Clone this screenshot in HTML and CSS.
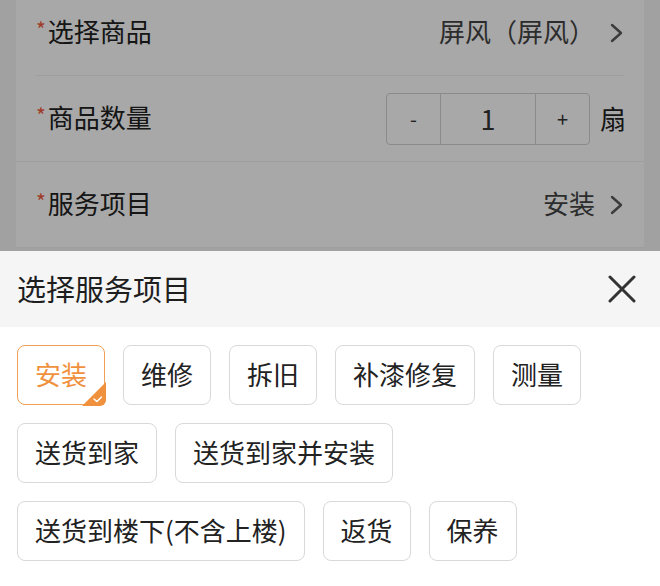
FILE: index.html
```html
<!DOCTYPE html>
<html lang="zh-CN">

<head>
    <meta charset="UTF-8">
    <meta name="viewport" content="width=device-width, initial-scale=1.0">
    <link rel="stylesheet" href="styles.css">
    <title>选择服务项目</title>
</head>

<body>
    <div class="page">
        <div class="card">
            <div class="form-row row-inset">
                <span class="form-label"><i class="required">*</i>选择商品</span>
                <span class="form-value">屏风（屏风）</span>
                <svg class="chevron" viewBox="0 0 14 20"><path d="M2 2l9 8-9 8" fill="none" stroke="currentColor" stroke-width="2.4" stroke-linecap="round" stroke-linejoin="round"/></svg>
            </div>
            <div class="form-row">
                <span class="form-label"><i class="required">*</i>商品数量</span>
                <div class="stepper">
                    <span class="step-btn step-minus">-</span>
                    <span class="step-value">1</span>
                    <span class="step-btn step-plus">+</span>
                </div>
                <span class="unit">扇</span>
            </div>
            <div class="form-row">
                <span class="form-label"><i class="required">*</i>服务项目</span>
                <span class="form-value">安装</span>
                <svg class="chevron" viewBox="0 0 14 20"><path d="M2 2l9 8-9 8" fill="none" stroke="currentColor" stroke-width="2.4" stroke-linecap="round" stroke-linejoin="round"/></svg>
            </div>
        </div>
        <div class="mask"></div>
    </div>

    <div class="sheet">
        <div class="sheet-header">
            <span class="sheet-title">选择服务项目</span>
            <svg class="close-icon" viewBox="0 0 28 28"><path d="M2 2l24 24M26 2L2 26" stroke="currentColor" stroke-width="3" stroke-linecap="round"/></svg>
        </div>
        <div class="chips">
            <span class="chip selected">安装
                <svg class="chip-check" viewBox="0 0 24 24"><path d="M24 0V18a6 6 0 0 1-6 6H0z" fill="#f0913d"/><path d="M12 17l3 2.6 4.5-4.6" fill="none" stroke="#ffffff" stroke-width="1.4" stroke-linecap="round" stroke-linejoin="round"/></svg>
            </span>
            <span class="chip">维修</span>
            <span class="chip">拆旧</span>
            <span class="chip">补漆修复</span>
            <span class="chip">测量</span>
            <span class="chip">送货到家</span>
            <span class="chip">送货到家并安装</span>
            <span class="chip">送货到楼下(不含上楼)</span>
            <span class="chip">返货</span>
            <span class="chip">保养</span>
        </div>
    </div>
</body>

</html>
```

FILE: styles.css
```css
* {
    margin: 0;
    padding: 0;
    box-sizing: border-box;
}

body {
    font-family: "Noto Sans CJK SC", "Noto Sans", sans-serif;
    width: 660px;
    height: 586px;
    overflow: hidden;
    background-color: #ffffff;
    color: #222222;
}

/* Page under the mask */
.page {
    position: relative;
    height: 251px;
    overflow: hidden;
    padding: 0 16px;
    background-color: #f4f4f6;
}

.card {
    margin-top: -10px;
    background-color: #ffffff;
}

.form-row {
    display: flex;
    align-items: center;
    height: 86px;
    padding: 0 20px;
    border-bottom: 1px solid #f0f0f0;
}

.row-inset {
    margin: 0 20px;
    padding: 0;
}

.form-label {
    font-size: 26px;
    color: #222222;
    flex: 1;
    white-space: nowrap;
    margin-bottom: 4px;
}

.required {
    font-style: normal;
    font-size: 21px;
    color: #f25a3a;
    margin-right: 2px;
    vertical-align: 4px;
}

.form-value {
    font-size: 26px;
    color: #444444;
    margin-right: 15px;
    margin-bottom: 4px;
}

.chevron {
    width: 14px;
    height: 20px;
    color: #5a5a5a;
}

/* Stepper */
.stepper {
    display: flex;
    height: 52px;
    border: 1.5px solid #d2d2d2;
    border-radius: 4px;
}

.step-btn,
.step-value {
    display: flex;
    align-items: center;
    justify-content: center;
    color: #333333;
}

.step-btn {
    width: 53px;
    font-size: 20px;
}

.step-value {
    width: 96px;
    font-size: 27px;
    border-left: 1.5px solid #d2d2d2;
    border-right: 1.5px solid #d2d2d2;
}

.unit {
    font-size: 26px;
    margin-left: 10px;
    margin-right: -2px;
    margin-bottom: 2px;
}

.mask {
    position: absolute;
    top: 0;
    left: 0;
    right: 0;
    bottom: 0;
    background-color: rgba(0, 0, 0, 0.34);
}

/* Bottom sheet */
.sheet {
    background-color: #ffffff;
}

.sheet-header {
    display: flex;
    align-items: center;
    justify-content: space-between;
    height: 76px;
    padding: 0 24px 0 17px;
    background-color: #f5f5f5;
}

.sheet-title {
    font-size: 29px;
    color: #1e1e1e;
    margin-bottom: 3px;
}

.close-icon {
    width: 28px;
    height: 28px;
    color: #333333;
}

.chips {
    display: flex;
    flex-wrap: wrap;
    gap: 18px;
    padding: 18px 17px;
}

.chip {
    position: relative;
    display: flex;
    align-items: center;
    height: 60px;
    padding: 0 17px 3px;
    font-size: 26px;
    color: #222222;
    border: 1.5px solid #d9d9d9;
    border-radius: 8px;
    white-space: nowrap;
}

.chip.selected {
    color: #f0913d;
    border-color: #f0a055;
}

.chip-check {
    position: absolute;
    right: -1.5px;
    bottom: -1.5px;
    width: 24px;
    height: 24px;
}
```
